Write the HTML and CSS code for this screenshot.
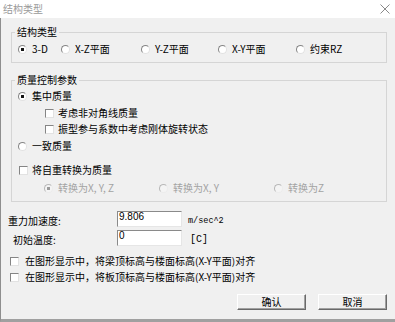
FILE: index.html
```html
<!DOCTYPE html>
<html lang="zh-CN">

<head>
  <meta charset="UTF-8">
  <title>结构类型</title>
  <link rel="stylesheet" href="styles.css">
</head>

<body>
  <div class="window">
    <div class="titlebar">
      <span class="title">结构类型</span>
      <svg class="close" width="10" height="10" viewBox="0 0 10 10">
        <path d="M0.5 0.5L9.5 9.5M9.5 0.5L0.5 9.5" stroke="#8a8a8a" stroke-width="1" fill="none"/>
      </svg>
    </div>
    <div class="dialog">
      <fieldset class="group group-type">
        <legend>结构类型</legend>
        <div class="type-row">
          <label class="opt"><input type="radio" name="type" checked>3-D</label>
          <label class="opt"><input type="radio" name="type">X-Z平面</label>
          <label class="opt"><input type="radio" name="type">Y-Z平面</label>
          <label class="opt"><input type="radio" name="type">X-Y平面</label>
          <label class="opt"><input type="radio" name="type">约束RZ</label>
        </div>
      </fieldset>

      <fieldset class="group group-mass">
        <legend>质量控制参数</legend>
        <label class="opt row-lumped"><input type="radio" name="mass" checked>集中质量</label>
        <label class="opt row-sub row-sub1"><input type="checkbox">考虑非对角线质量</label>
        <label class="opt row-sub row-sub2"><input type="checkbox">振型参与系数中考虑刚体旋转状态</label>
        <label class="opt row-consistent"><input type="radio" name="mass">一致质量</label>
        <label class="opt row-convert"><input type="checkbox">将自重转换为质量</label>
        <div class="convert-row">
          <label class="opt disabled"><input type="radio" name="conv" checked disabled>转换为X, Y, Z</label>
          <label class="opt disabled"><input type="radio" name="conv" disabled>转换为X, Y</label>
          <label class="opt disabled"><input type="radio" name="conv" disabled>转换为Z</label>
        </div>
      </fieldset>

      <div class="field field-gravity">
        <label class="field-label">重力加速度:</label>
        <input class="textbox" type="text" value="9.806">
        <span class="unit">m/sec^2</span>
      </div>
      <div class="field field-temp">
        <label class="field-label">初始温度:</label>
        <input class="textbox" type="text" value="0">
        <span class="unit">[C]</span>
      </div>

      <label class="opt align-row align-row1"><input type="checkbox">在图形显示中，将梁顶标高与楼面标高(X-Y平面)对齐</label>
      <label class="opt align-row align-row2"><input type="checkbox">在图形显示中，将板顶标高与楼面标高(X-Y平面)对齐</label>

      <div class="buttons">
        <button class="btn">确认</button>
        <button class="btn">取消</button>
      </div>
    </div>
  </div>
</body>

</html>
```

FILE: styles.css
```css
* {
  box-sizing: border-box;
}

body {
  margin: 0;
  background: #f0f0f0;
  font-family: "Noto Sans CJK SC", "Liberation Sans", sans-serif;
  font-size: 10px;
  color: #000;
}

.window {
  width: 395px;
  height: 322px;
  overflow: hidden;
}

.titlebar {
  height: 18px;
  background: #fff;
  display: flex;
  align-items: center;
  justify-content: space-between;
  padding: 0 5px 1px 3px;
}

.title {
  color: #9a9a9a;
  line-height: 12px;
}

.dialog {
  height: 304px;
  background: #f0f0f0;
  border-left: 1px solid #8e8e8e;
  border-bottom: 3px solid #a0a0a0;
  padding-top: 8px;
}

/* group boxes */
.group {
  margin: 0 8px 0 10px;
  border: 1px solid #d5d5d5;
  padding: 0 0 0 6px;
  min-width: 0;
}

.group legend {
  padding: 0 2px;
  margin-left: -3px;
  line-height: 12px;
}

.group-type {
  padding-top: 5px;
  padding-bottom: 7px;
}

.group-mass {
  margin-top: 11px;
  padding-top: 4px;
  padding-bottom: 7px;
}

.type-row {
  display: grid;
  grid-template-columns: 43px 80px 77px 78px auto;
}

.convert-row {
  display: grid;
  grid-template-columns: 115px 115px auto;
  margin-top: 6px;
  margin-left: 26px;
}

/* options */
.opt {
  display: flex;
  align-items: center;
  gap: 5px;
  height: 12px;
  line-height: 12px;
  white-space: nowrap;
}

.opt input {
  appearance: none;
  -webkit-appearance: none;
  margin: 0;
  width: 9px;
  height: 9px;
  flex: none;
  background: #fff;
  border: 1px solid;
  border-color: #858585 #e2e2e2 #e2e2e2 #858585;
}

.opt input[type="radio"] {
  border-radius: 50%;
}

.opt input[type="radio"]:checked {
  background: radial-gradient(circle, #111 0 1.4px, #fff 2px);
}

.opt input[type="checkbox"] {
  gap: 4px;
}

.opt.disabled {
  color: #a3a3a3;
}

.opt.disabled input {
  border-color: #b8b8b8 #ececec #ececec #b8b8b8;
  background: #f4f4f4;
}

.opt.disabled input:checked {
  background: radial-gradient(circle, #9a9a9a 0 1.4px, #f4f4f4 2px);
}

.row-sub {
  margin-left: 27px;
  gap: 4px;
}

.row-sub1 {
  margin-top: 5px;
}

.row-sub2 {
  margin-top: 4px;
}

.row-consistent {
  margin-top: 5px;
}

.row-convert {
  margin-top: 12px;
  margin-left: 1px;
  gap: 4px;
}

/* numeric fields */
.field {
  display: flex;
  align-items: center;
  height: 16px;
  padding-left: 7px;
}

.field-gravity {
  margin-top: 9px;
}

.field-temp {
  margin-top: 3px;
}

.field-label {
  width: 109px;
  padding-top: 3px;
}

.field-temp .field-label {
  padding-left: 5px;
}

.textbox {
  width: 65px;
  height: 16px;
  margin: 0;
  padding: 0 0 5px 1px;
  border: 1px solid;
  border-color: #8a8a8a #e6e6e6 #e6e6e6 #8a8a8a;
  background: #fff;
  font-family: "Liberation Sans", sans-serif;
  font-size: 10px;
  line-height: 10px;
  color: #000;
}

.unit {
  margin-left: 6px;
  font-family: "Liberation Mono", monospace;
  font-size: 8.5px;
  padding-top: 3px;
}

.field-temp .unit {
  margin-left: 8px;
  font-size: 10px;
}

/* alignment checkboxes */
.align-row {
  padding-left: 9px;
  gap: 6px;
}

.align-row1 {
  margin-top: 9px;
}

.align-row2 {
  margin-top: 4px;
}

/* buttons */
.buttons {
  display: flex;
  justify-content: flex-end;
  gap: 12px;
  margin-top: 11px;
  padding-right: 8px;
}

.btn {
  width: 69px;
  height: 16px;
  margin: 0;
  padding: 0;
  background: #f0f0f0;
  border: 1px solid;
  border-color: #fff #696969 #696969 #fff;
  box-shadow: inset -1px -1px #a0a0a0;
  font-family: "Noto Sans CJK SC", sans-serif;
  font-size: 10px;
  line-height: 12px;
  color: #000;
}
```
